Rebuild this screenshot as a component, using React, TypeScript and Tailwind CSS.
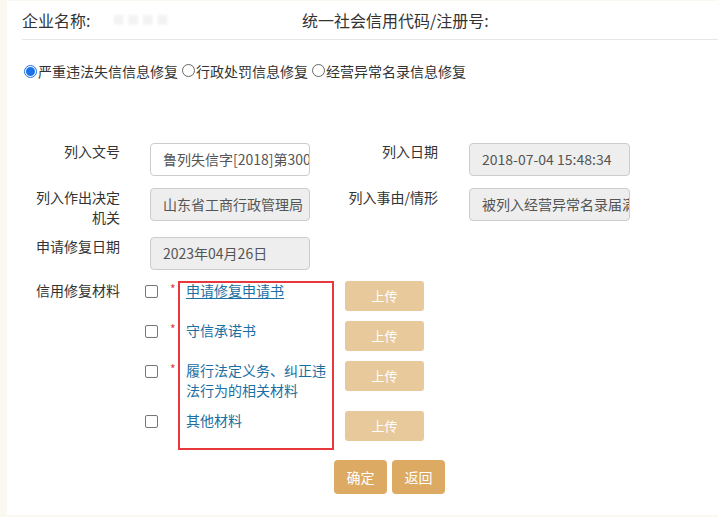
import React from "react";

const font = { fontFamily: '"Noto Sans CJK SC", "Microsoft YaHei", sans-serif' };

function Radio({ checked }: { checked?: boolean }) {
  return checked ? (
    <span className="inline-flex h-[13px] w-[13px] shrink-0 items-center justify-center rounded-full border border-[#1a73e8] bg-white">
      <span className="h-[9px] w-[9px] rounded-full bg-[#1a73e8]" />
    </span>
  ) : (
    <span className="inline-block h-[13px] w-[13px] shrink-0 rounded-full border border-[#666] bg-white" />
  );
}

function Field({ value, white }: { value: string; white?: boolean }) {
  return (
    <div
      className={`h-[33px] overflow-hidden whitespace-nowrap rounded-[4px] border border-[#cccccc] pl-[12px] pr-[2px] text-[14px] leading-[30px] text-[#555] ${
        white ? "bg-white" : "bg-[#eeeeee]"
      }`}
    >
      {value}
    </div>
  );
}

const materials = [
  { req: true, text: "申请修复申请书", underline: true, h: "h-[40px]" },
  { req: true, text: "守信承诺书", underline: false, h: "h-[40px]" },
  { req: true, text: "履行法定义务、纠正违法行为的相关材料", underline: false, h: "h-[50px]" },
  { req: false, text: "其他材料", underline: false, h: "h-[38px]" },
];

export default function App() {
  return (
    <div className="min-h-[517px] w-[718px] bg-[#fbf8f1] pt-[1px] pl-[7px] text-[#333]" style={font}>
      <div className="h-[514px] bg-white">
        {/* header */}
        <div className="ml-[15px] flex h-[39px] items-center border-b border-[#e6e6e6] text-[16px]">
          <div className="flex w-[280px] items-center">
            <span>企业名称:</span>
            <span className="ml-[22px] text-[12px] text-[#f3f3f3] blur-[1px]">■ ■ ■ ■</span>
          </div>
          <span>统一社会信用代码/注册号:</span>
        </div>

        {/* radios */}
        <div className="ml-[17px] mt-[21px] flex items-center text-[14px] leading-[20px] text-[#333]">
          <Radio checked />
          <span className="ml-[1px]">严重违法失信信息修复</span>
          <span className="ml-[4px]"><Radio /></span>
          <span className="ml-[1px]">行政处罚信息修复</span>
          <span className="ml-[4px]"><Radio /></span>
          <span className="ml-[1px]">经营异常名录信息修复</span>
        </div>

        {/* form */}
        <div className="mt-[62px] text-[14px] leading-[20px]">
          <div className="flex items-start">
            <div className="-mt-[2px] w-[113px] text-right">列入文号</div>
            <div className="ml-[30px] w-[160px]">
              <Field value="鲁列失信字[2018]第3000" white />
            </div>
            <div className="-mt-[2px] w-[128px] text-right">列入日期</div>
            <div className="ml-[31px] w-[161px]">
              <Field value="2018-07-04 15:48:34" />
            </div>
          </div>

          <div className="mt-[12px] flex h-[40px] items-start">
            <div className="-mt-[1px] w-[113px] text-right">
              列入作出决定
              <br />
              机关
            </div>
            <div className="ml-[30px] w-[160px]">
              <Field value="山东省工商行政管理局" />
            </div>
            <div className="-mt-[1px] w-[128px] text-right">列入事由/情形</div>
            <div className="ml-[31px] w-[161px]">
              <Field value="被列入经营异常名录届满" />
            </div>
          </div>

          <div className="mt-[9px] flex items-start">
            <div className="-mt-[1px] w-[113px] text-right">申请修复日期</div>
            <div className="ml-[30px] w-[160px]">
              <Field value="2023年04月26日" />
            </div>
          </div>

          {/* materials */}
          <div className="mt-[11px] flex items-start">
            <div className="-mt-[1px] w-[113px] text-right">信用修复材料</div>
            <div className="ml-[25px] flex flex-col">
              {materials.map((m, i) => (
                <div key={i} className={`flex items-start ${m.h}`}>
                  <span className="mt-[4px] inline-block h-[13px] w-[13px] rounded-[2px] border border-[#767676] bg-white" />
                  <span className="ml-[12px] w-[8px] pt-[2px] text-[12px] leading-[12px] text-[#e53935]">
                    {m.req ? "*" : ""}
                  </span>
                </div>
              ))}
            </div>
            <div className="w-[156px] border-2 border-[#e8383d] pl-[6px]">
              {materials.map((m, i) => (
                <div key={i} className={`${m.h} ${i === 0 ? "-mt-[3px]" : ""} ${i === materials.length - 1 ? "pb-[2px]" : ""}`}>
                  <span
                    className={`text-[14px] leading-[20px] text-[#1a6fa3] ${m.underline ? "underline underline-offset-2" : ""}`}
                  >
                    {m.text}
                  </span>
                </div>
              ))}
            </div>
            <div className="ml-[11px] flex flex-col">
              {materials.map((m, i) => (
                <div key={i} className={`${m.h}`}>
                  <button className="h-[30px] w-[79px] rounded-[3px] bg-[#e8c99b] text-[13px] text-white">
                    上传
                  </button>
                </div>
              ))}
            </div>
          </div>

          <div className="ml-[327px] mt-[10px] flex gap-[5px]">
            <button className="h-[34px] w-[53px] rounded-[4px] bg-[#dcaa63] text-[14px] text-white">确定</button>
            <button className="h-[34px] w-[53px] rounded-[4px] bg-[#dcaa63] text-[14px] text-white">返回</button>
          </div>
        </div>
      </div>
    </div>
  );
}
